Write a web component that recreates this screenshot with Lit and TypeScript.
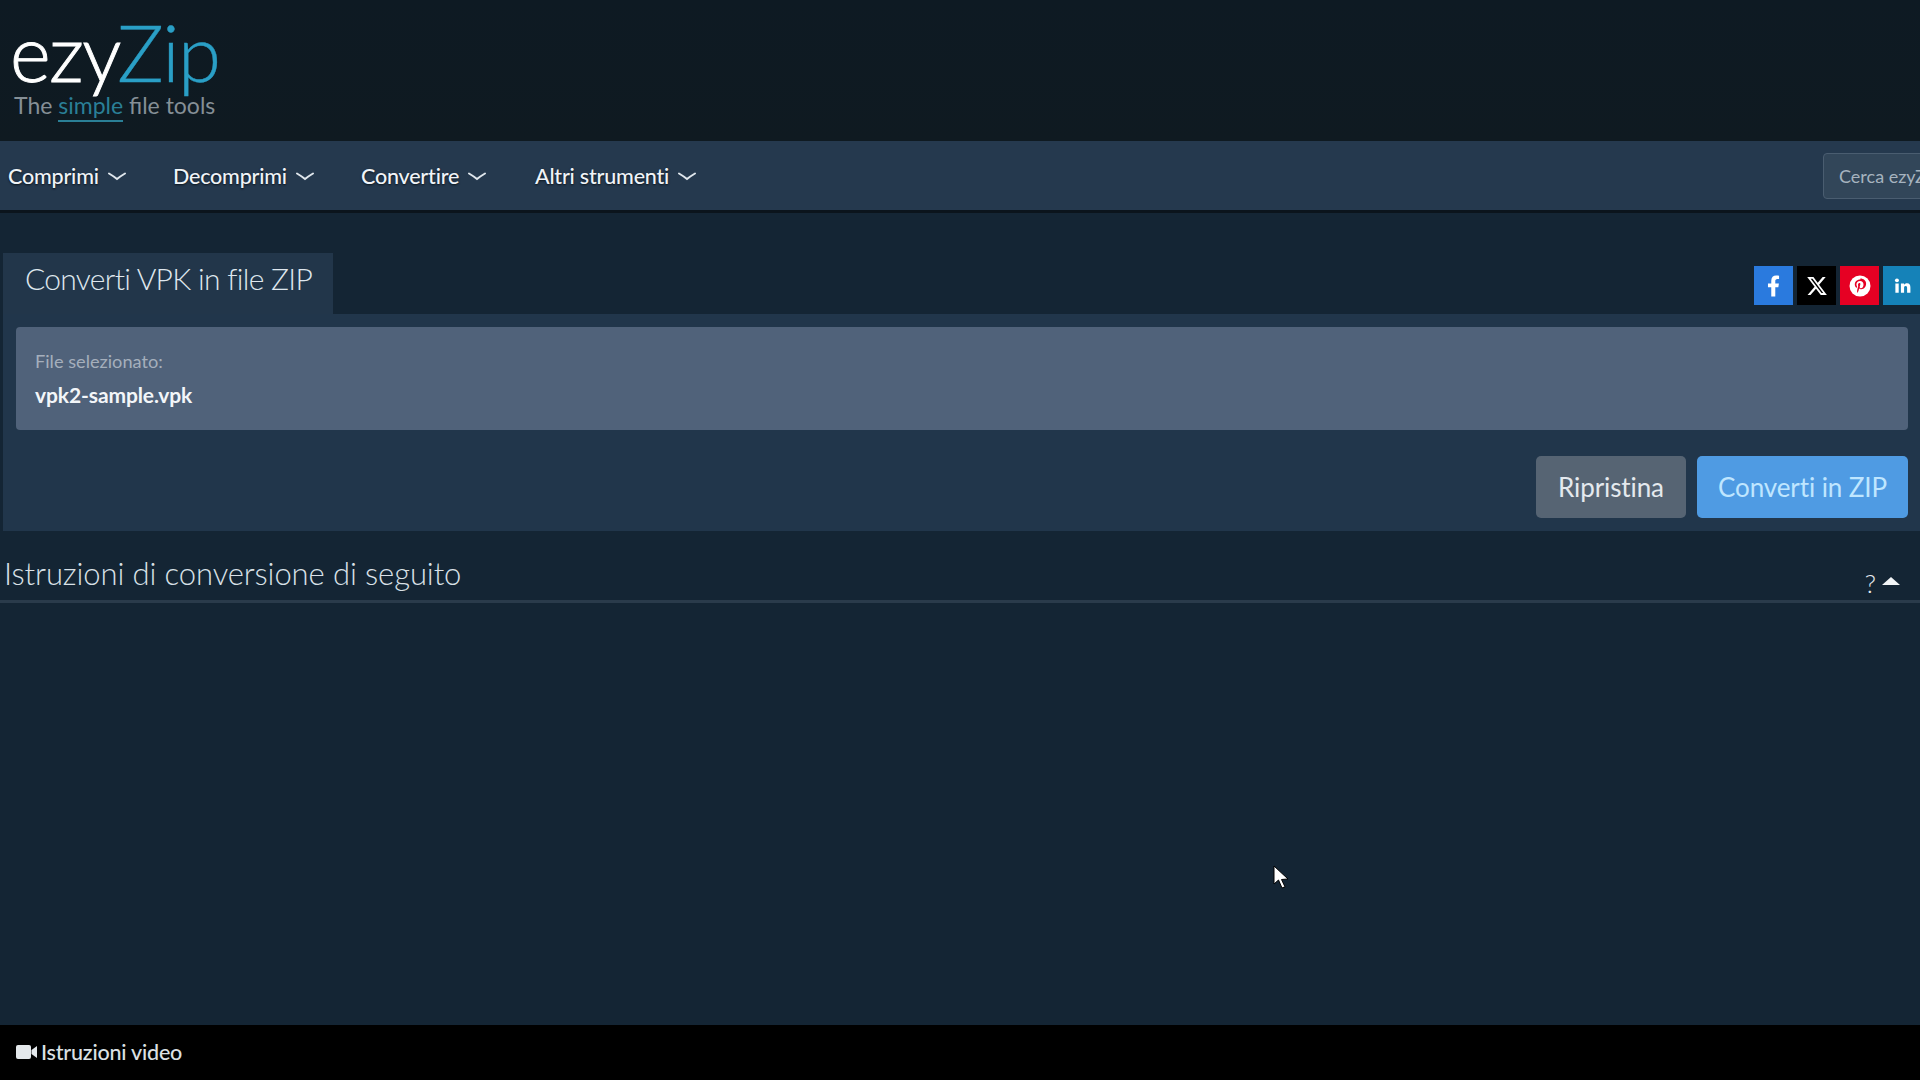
import { LitElement, html, css } from "lit";
import { customElement } from "lit/decorators.js";

const chevron = html`<svg class="chev" viewBox="0 0 18 9" width="18" height="9"><path d="M1 1.500 Q6 4.500 9 7 Q12 4.500 17 1.500" fill="none" stroke="currentColor" stroke-width="2" stroke-linecap="round"/></svg>`;

@customElement("app-root")
export class AppRoot extends LitElement {
  static styles = css`
    :host { display: flex; flex-direction: column; height: 100vh; overflow: hidden; position: relative; background: #142534; color: #e8edf2; font-family: Lato, "Liberation Sans", sans-serif; }
    .head { height: 141px; flex: none; background: linear-gradient(#0e1a23, #0f1a21); padding: 12px 0 0 10px; box-sizing: border-box; }
    .logo { font-size: 78px; font-weight: 300; line-height: 80px; letter-spacing: -1.500px; color: #fff; height: 80px; -webkit-text-stroke: 0.9px #fff; white-space: nowrap; }
    .logo span { color: #2a9fc6; -webkit-text-stroke: 0.4px #2a9fc6; }
    .tag { font-size: 23px; line-height: 26px; color: #858f96; margin-left: 4px; white-space: pre; }
    .tag span { color: #2a7f96; border-bottom: 2px solid #2a7f96; padding-bottom: 1px; }
    nav { height: 72px; flex: none; box-sizing: border-box; background: #25394e; border-bottom: 3px solid #0b141c; display: flex; align-items: center; overflow: hidden; padding-left: 8px; }
    .item { display: flex; align-items: center; gap: 9px; font-size: 21.5px; font-weight: 500; color: #f0f4f8; letter-spacing: -0.2px; text-shadow: 0 1px 2px #0b141c; }
    .item .chev { color: #dfe6ec; margin-top: 2px; }
    .i1 { width: 165px; } .i2 { width: 188px; } .i3 { width: 174px; }
    .search { margin-left: auto; margin-right: -160px; width: 257px; height: 46px; box-sizing: border-box; flex: none; background: #324659; border: 1px solid #4a5d70; border-radius: 4px; color: #a6b3bf; font-size: 18px; display: flex; align-items: center; padding-left: 15px; white-space: nowrap; }
    main { flex: 1; display: flex; flex-direction: column; padding-top: 40px; min-height: 0; }
    .tabrow { display: flex; justify-content: space-between; align-items: flex-start; height: 61px; padding-left: 3px; }
    .tab { width: 330px; height: 61px; box-sizing: border-box; background: #22364a; font-size: 30px; font-weight: 300; color: #dfe7ee; padding: 6px 0 0 22px; line-height: 38px; letter-spacing: -0.7px; white-space: nowrap; }
    .social { display: flex; gap: 4px; margin-top: 13px; margin-right: -2px; }
    .soc { width: 39px; height: 39px; display: flex; align-items: center; justify-content: center; }
    .fb { background: #2a7ade; } .x { background: #000; } .pin { background: #e60023; } .li { background: #1582b8; }
    .panel { margin-left: 3px; height: 217px; box-sizing: border-box; background: #21364b; padding: 13px 12px 0 13px; flex: none; }
    .file { height: 103px; box-sizing: border-box; background: #50627a; border-radius: 4px; padding: 24px 19px 0; }
    .lab { font-size: 18.2px; line-height: 20px; color: #a5afbc; }
    .name { font-size: 21px; line-height: 22px; font-weight: 700; color: #f3f6f9; margin-top: 13px; letter-spacing: -0.1px; }
    .btns { display: flex; justify-content: flex-end; gap: 11px; margin-top: 26px; }
    button { font: inherit; font-size: 26px; height: 62px; border: 0; border-radius: 5px; padding: 0; color: #e4e9ee; letter-spacing: -0.1px; }
    .reset { width: 150px; background: #566473; }
    .go { width: 211px; background: #4f9be3; color: #bfe6ff; }
    .ins { display: flex; justify-content: space-between; align-items: flex-end; height: 72px; box-sizing: border-box; border-bottom: 3px solid #2a3b4b; padding: 0 20px 0 4px; flex: none; }
    .ins h2 { margin: 0; font-size: 31px; font-weight: 300; color: #d9e1e8; line-height: 36px; padding-bottom: 9px; letter-spacing: -0.1px; }
    .q { display: flex; align-items: center; gap: 6px; padding-bottom: 2px; font-size: 26px; color: #e6ebef; font-weight: 300; line-height: 30px; }
    .tri { width: 0; height: 0; border-left: 9px solid transparent; border-right: 9px solid transparent; border-bottom: 8px solid #f2f5f7; margin-top: -4px; }
    footer { height: 55px; flex: none; background: #000; display: flex; align-items: center; gap: 4px; padding-left: 16px; padding-bottom: 2px; box-sizing: border-box; font-size: 21.5px; font-weight: 500; color: #dbe0e4; letter-spacing: -0.2px; }
    .cursor { position: absolute; left: 1273px; top: 865px; }
  `;

  render() {
    return html`
      <div class="head">
        <div class="logo">ezy<span>Zip</span></div>
        <div class="tag">The <span>simple</span> file tools</div>
      </div>
      <nav>
        <div class="item i1">Comprimi ${chevron}</div>
        <div class="item i2">Decomprimi ${chevron}</div>
        <div class="item i3">Convertire ${chevron}</div>
        <div class="item">Altri strumenti ${chevron}</div>
        <div class="search">Cerca ezyZip</div>
      </nav>
      <main>
        <div class="tabrow">
          <div class="tab">Converti VPK in file ZIP</div>
          <div class="social">
            <div class="soc fb"><svg width="13" height="24" viewBox="0 0 320 512" fill="#fff"><path d="M279 288l14-93h-89v-60c0-25 12-50 52-50h41V6s-37-6-72-6C152 0 105 44 105 124v71H24v93h81v224h99V288z"/></svg></div>
            <div class="soc x"><svg width="22" height="22" viewBox="0 0 24 24" fill="#fff"><path d="M18.200 2.300h3.300l-7.200 8.200 8.500 11.200h-6.700l-5.200-6.800-6 6.800H1.700l7.700-8.800L1.300 2.300h6.800l4.700 6.200zm-1.200 17.400h1.800L7.100 4.200H5.100z"/></svg></div>
            <div class="soc pin"><svg width="24" height="24" viewBox="0 0 24 24"><circle cx="12" cy="12" r="10.500" fill="#fff"/><path fill="#e60023" d="M12.300 5.600c-3.600 0-5.500 2.400-5.500 5 0 1.200.7 2.800 1.700 3.200.2.100.3 0 .3-.1l.3-1c0-.1 0-.2-.1-.3-.3-.4-.6-1.100-.6-1.800 0-1.800 1.400-3.500 3.700-3.500 2 0 3.400 1.400 3.400 3.300 0 2.200-1.100 3.800-2.600 3.800-.8 0-1.400-.7-1.200-1.500.2-1 .7-2 .7-2.700 0-.6-.3-1.100-1-1.100-.8 0-1.400.8-1.400 1.900 0 .7.200 1.200.2 1.200l-1 4c-.2.9 0 2.200 0 2.700l.2.100c.3-.4 1-1.500 1.200-2.300l.6-2.300c.3.600 1.200 1.100 2.100 1.100 2.800 0 4.800-2.600 4.800-5.700 0-3-2.500-5.200-5.700-5.200z"/></svg></div>
            <div class="soc li"><svg width="19" height="19" viewBox="0 0 24 24" fill="#fff"><circle cx="5" cy="5.500" r="2.500"/><path d="M3 9.500h4.200V21H3zM10 9.500h4v1.700c.7-1.200 2-2 3.700-2 3.400 0 4.300 2.200 4.300 5.300V21h-4.200v-5.700c0-1.500-.3-2.700-1.900-2.700s-1.900 1.200-1.900 2.700V21H10z"/></svg></div>
          </div>
        </div>
        <div class="panel">
          <div class="file">
            <div class="lab">File selezionato:</div>
            <div class="name">vpk2-sample.vpk</div>
          </div>
          <div class="btns">
            <button class="reset">Ripristina</button>
            <button class="go">Converti in ZIP</button>
          </div>
        </div>
        <div class="ins">
          <h2>Istruzioni di conversione di seguito</h2>
          <div class="q">?<span class="tri"></span></div>
        </div>
      </main>
      <footer>
        <svg width="21" height="14" viewBox="0 0 21 14" fill="#e4e8eb"><rect x="0" y="0" width="15" height="14" rx="2"/><path d="M15.500 5 L21 1 V13 L15.500 9 Z"/></svg>
        Istruzioni video
      </footer>
      <svg class="cursor" width="16" height="25" viewBox="0 0 16 25"><path d="M1 1 V19 L5.500 15 L9 23 L12 21.800 L8.500 14.500 L15 14 Z" fill="#fff" stroke="#000" stroke-width="1"/></svg>
    `;
  }
}
